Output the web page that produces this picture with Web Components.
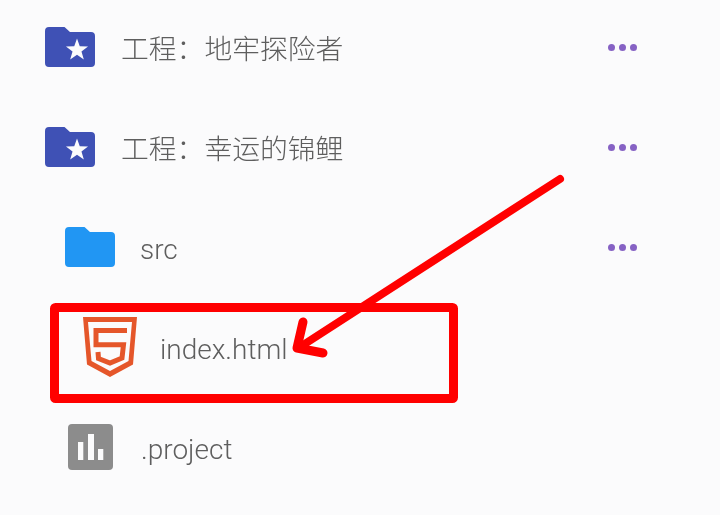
<!DOCTYPE html>
<html>
<head>
<meta charset="utf-8">
<title>Files</title>
<style>
    html, body { margin: 0; height: 100%; background: #fbfbfc; overflow: hidden; }
</style>
</head>
<body>
<file-annotated>
    <file-list>
        <file-row indent="45" gap="26" size="27.8" more><file-icon slot="icon" kind="project"></file-icon>工程：地牢探险者</file-row>
        <file-row indent="45" gap="26" size="27.8" more><file-icon slot="icon" kind="project"></file-icon>工程：幸运的锦鲤</file-row>
        <file-row indent="65" gap="25" nudge="4" more><file-icon slot="icon" kind="folder"></file-icon>src</file-row>
        <file-row indent="83" gap="23" nudge="4"><file-icon slot="icon" kind="html"></file-icon>index.html</file-row>
        <file-row indent="68" gap="28" nudge="4"><file-icon slot="icon" kind="chart"></file-icon>.project</file-row>
    </file-list>
</file-annotated>

<script>
const ICONS = {
    project: `<svg width="50" height="40" viewBox="0 0 50 40">
        <path fill="#3f51b5" d="M4 0H19.500L25 5H46a4 4 0 0 1 4 4V36a4 4 0 0 1-4 4H4a4 4 0 0 1-4-4V4a4 4 0 0 1 4-4Z"/>
        <path fill="#fbfbfc" d="M32 11.400L34.760 19.200L43.030 19.420L36.470 24.450L38.820 32.380L32 27.700L25.180 32.380L27.530 24.450L20.970 19.420L29.240 19.200Z"/>
    </svg>`,
    folder: `<svg width="50" height="40" viewBox="0 0 50 40">
        <path fill="#2196f3" d="M4 0H19.500L25 5H46a4 4 0 0 1 4 4V36a4 4 0 0 1-4 4H4a4 4 0 0 1-4-4V4a4 4 0 0 1 4-4Z"/>
    </svg>`,
    // shield band, then the 5 drawn as one stroke inside it
    html: `<svg width="54" height="60" viewBox="0 0 54 60">
        <path fill="#e5562a" fill-rule="evenodd" d="M0 0H54L50 47.500L27 60L4 47.500ZM5 5L8.500 44L27 54L45.500 44L49 5Z"/>
        <path fill="none" stroke="#e5562a" stroke-width="5" d="M44 13.500H13V27.700H40.500L39 41L27 46L15.500 41.500L15 35"/>
    </svg>`,
    chart: `<svg width="45" height="46" viewBox="0 0 45 46">
        <rect width="45" height="46" rx="4" fill="#8c8c8c"/>
        <path fill="#fbfbfc" d="M10 18h5.300v18h-5.300zM20 10h6v26h-6zM30 25h5.300v11h-5.300z"/>
    </svg>`
};

class FileIcon extends HTMLElement {
    connectedCallback() {
        const root = this.shadowRoot || this.attachShadow({ mode: 'open' });
        root.innerHTML = `
        <style>
            :host { display: block; line-height: 0; }
        </style>
        ${ICONS[this.getAttribute('kind')] || ''}
        `;
    }
}

class FileRow extends HTMLElement {
    constructor() {
        super();
        this.attachShadow({ mode: 'open' });
    }

    connectedCallback() {
        const indent = this.getAttribute('indent') || 45;
        const gap = this.getAttribute('gap') || 27;
        const nudge = this.getAttribute('nudge') || 0;
        const size = this.getAttribute('size') || 28;
        const more = this.hasAttribute('more');

        this.shadowRoot.innerHTML = `
        <style>
            :host {
                display: flex;
                align-items: center;
                height: 100px;
                padding-left: ${indent}px;
                padding-right: 83px;
                gap: ${gap}px;
                box-sizing: border-box;
                font: 300 ${size}px Roboto, "Noto Sans CJK SC", sans-serif;
                color: #5e5e5e;
            }

            /* the blur gives grey antialiasing, the reference is a soft upscale */
            .name { flex: 1; white-space: nowrap; padding-top: ${nudge}px; filter: blur(0.3px); }

            .more { display: flex; gap: 4px; }

            .more i {
                width: 7px;
                height: 7px;
                border-radius: 50%;
                background: #8662c4;
            }
        </style>
        <slot name="icon"></slot>
        <span class="name"><slot></slot></span>
        ${more ? '<span class="more"><i></i><i></i><i></i></span>' : ''}
        `;
    }
}

class FileList extends HTMLElement {
    constructor() {
        super();
        this.attachShadow({ mode: 'open' }).innerHTML = `
        <style>
            :host { display: flex; flex-direction: column; margin-top: -3px; }
        </style>
        <slot></slot>
        `;
    }
}

// Red markup drawn over the screenshot: box around index.html and the arrow
class FileAnnotated extends HTMLElement {
    constructor() {
        super();
        this.attachShadow({ mode: 'open' }).innerHTML = `
        <style>
            :host { display: block; position: relative; width: 720px; height: 515px; overflow: hidden; }
            svg { position: absolute; left: 0; top: 0; }
        </style>
        <slot></slot>
        <svg width="720" height="515" fill="none" stroke="#ff0000" stroke-linecap="round" stroke-linejoin="round">
            <rect x="54.500" y="307.500" width="399" height="91" rx="1" stroke-width="9"/>
            <path stroke-width="8" d="M560 179L300 347"/>
            <path stroke-width="9" d="M303 322L297 348L323 353"/>
        </svg>
        `;
    }
}

customElements.define('file-icon', FileIcon);
customElements.define('file-row', FileRow);
customElements.define('file-list', FileList);
customElements.define('file-annotated', FileAnnotated);
</script>
</body>
</html>
